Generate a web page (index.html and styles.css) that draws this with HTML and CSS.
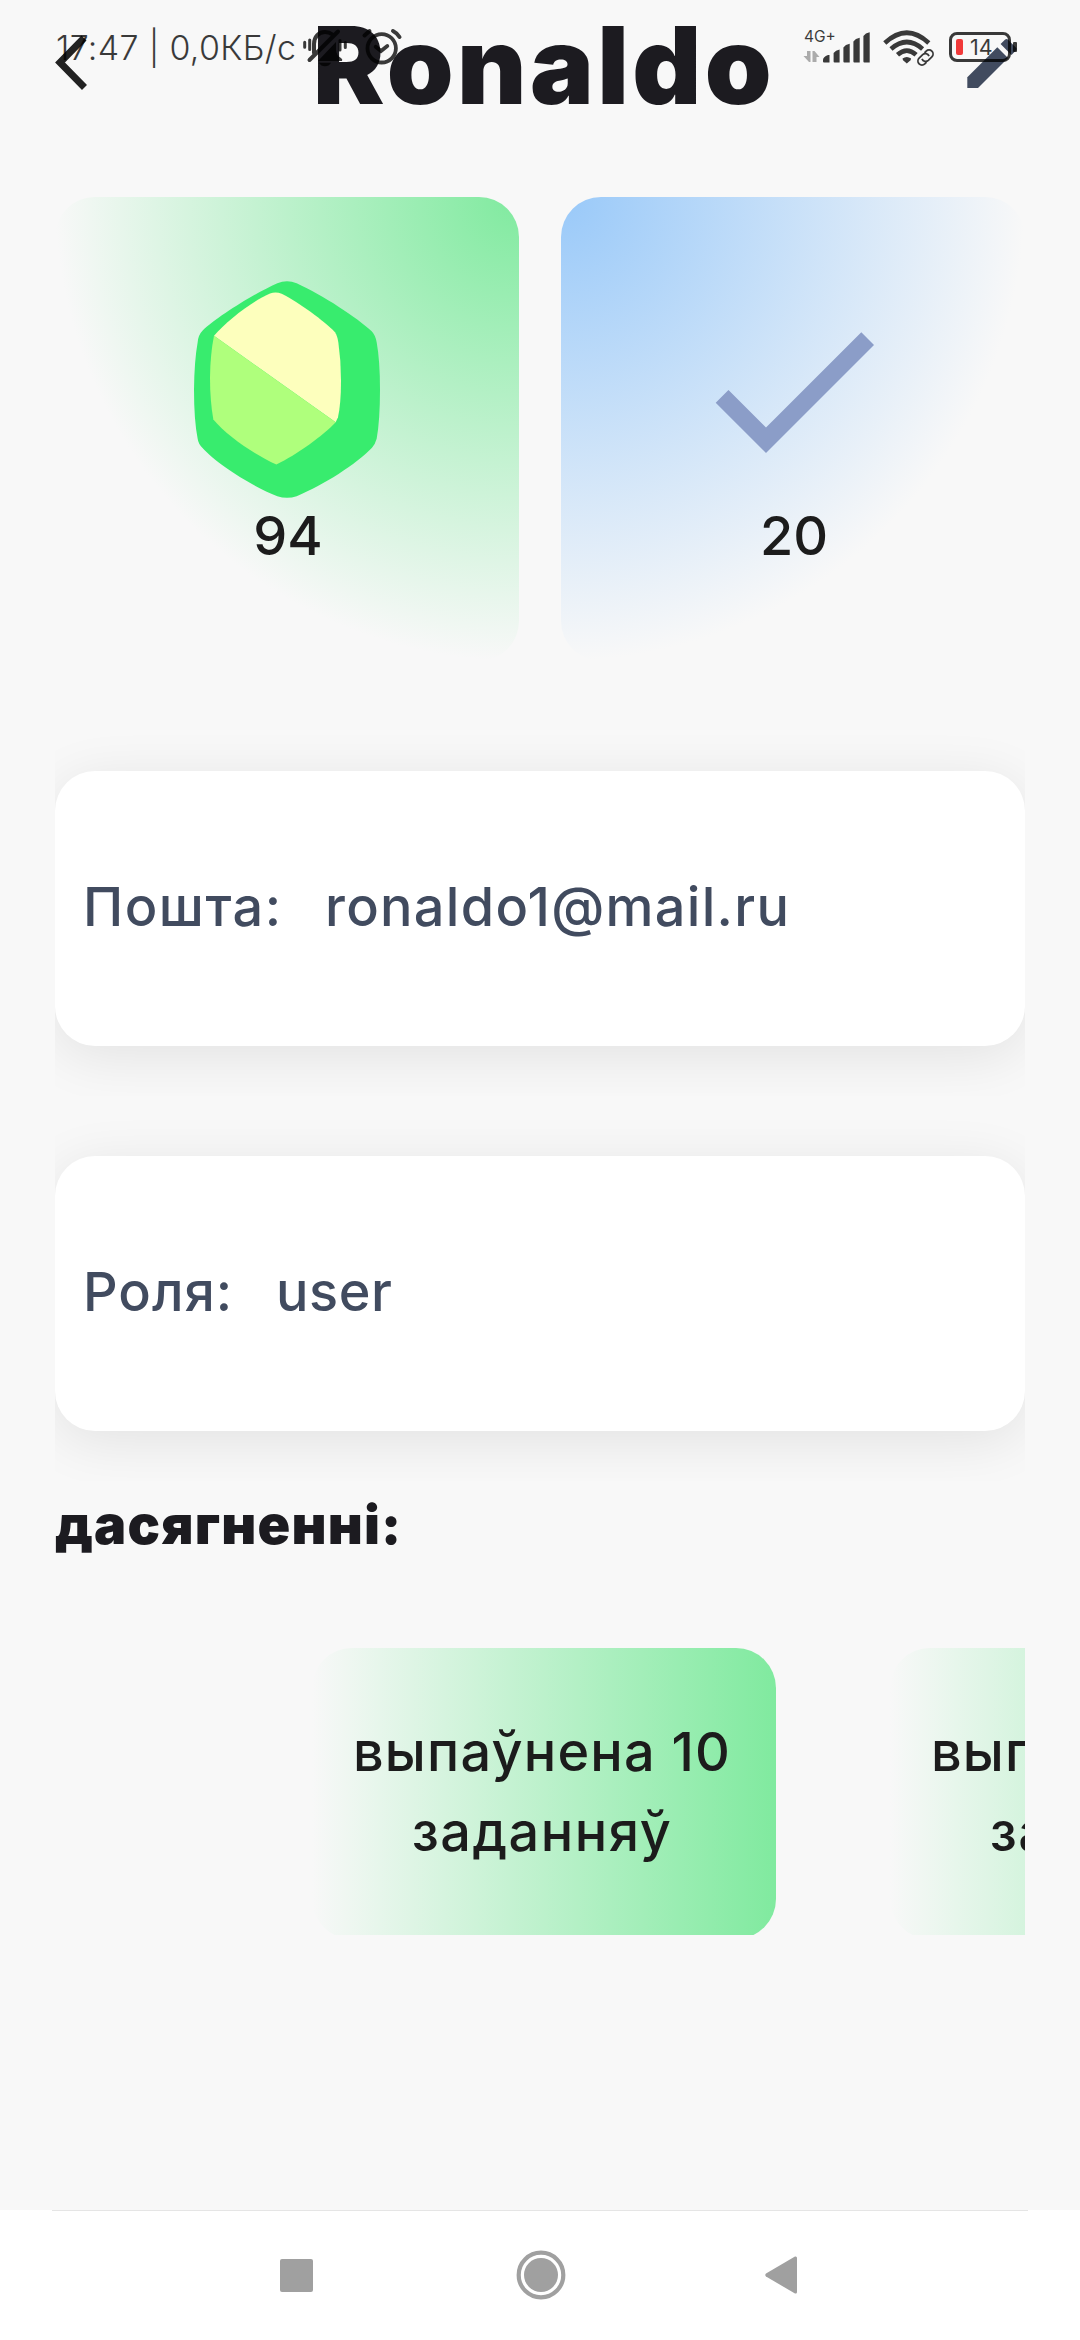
FILE: index.html
```html
<!DOCTYPE html>
<html lang="be">
<head>
<meta charset="utf-8">
<title>Ronaldo</title>
<link rel="stylesheet" href="styles.css">
</head>
<body>
<div class="screen">
  <main class="page">
    <header class="top">
      <svg class="back" viewBox="55 35 32 55"><path d="M84 38 60 62.5 84.5 87.5"/></svg>
      <h1 class="name">Ronaldo</h1>
      <svg class="edit" viewBox="967 38 50 50"><path d="M967.3 77.3l30-30L1008 58 978 88h-10.7z"/><path d="M1000.600 44l4.300-4.300q1.600-1.600 3.200 0l7.700 7.700q1.600 1.600 0 3.200l-4.300 4.300z"/></svg>
    </header>

    <section class="stats">
      <div class="stat stat-green">
        <svg class="gem" viewBox="462 302 558 650">
          <path fill="#38ec6e" d="M712 308Q741 296 770 308C850 345 950 410 995 452Q1006 463 1010 485Q1020 540 1020 627Q1020 720 1010 775Q1006 790 996 802C950 850 850 915 770 947Q741 957 712 947C640 920 530 850 487 802Q475 790 473 775Q462 720 462 627Q463 540 473 485Q475 463 488 450C530 410 640 340 712 308Z"/>
          <path fill="#fdffbd" d="M522 466C560 420 640 360 690 339Q708 333 725 340C780 368 850 420 885 455Q892 465 895 485Q903 540 903 600Q903 670 894 710L887 725Z"/>
          <path fill="#afff7c" d="M887 725C850 765 770 822 709 852C640 820 560 765 520 717Q510 660 510 590Q511 520 522 466Z"/>
        </svg>
        <span class="stat-value">94</span>
      </div>
      <div class="stat stat-blue">
        <svg class="check" viewBox="0 0 24 24"><path d="M9 16.170 4.830 12l-1.420 1.410L9 19 21 7l-1.410-1.410z"/></svg>
        <span class="stat-value">20</span>
      </div>
    </section>

    <section class="infos">
      <div class="info-clip"><div class="info"><span class="label mail-label">Пошта:</span><span class="mail">ronaldo1@mail.ru</span></div></div>
      <div class="info-clip"><div class="info"><span class="label role-label">Роля:</span><span class="role">user</span></div></div>
    </section>

    <h2 class="heading">дасягненні:</h2>

    <section class="carousel">
      <div class="badge"><span class="l1">выпаўнена 10</span><span class="l2">заданняў</span></div>
      <div class="badge"><span class="l1">выпаўнена 10</span><span class="l2">заданняў</span></div>
    </section>
  </main>

  <nav class="nav">
    <svg class="nav-square" viewBox="0 0 33 33"><rect width="33" height="33" rx="2"/></svg>
    <svg class="nav-circle" viewBox="0 0 50 50"><circle cx="25" cy="25" r="22.300" fill="none" stroke="#a0a0a0" stroke-width="4.200"/><circle cx="25" cy="25" r="17"/></svg>
    <svg class="nav-back" viewBox="0 0 32 38"><path d="M1 17.500 30 .500Q32 0 32 2V36Q32 38 30 37.500L1 20.500Q-.5 19 1 17.500Z"/></svg>
  </nav>

  <div class="status">
    <span class="clock">17:47 | 0,0КБ/с</span>
    <svg class="alerts" viewBox="300 25 104 45">
      <g fill="none" stroke="#000" stroke-linecap="round">
        <path stroke-width="3" d="M304.700 42.300v5M309.700 40v9.500M340 40.500v9.500M345.300 42.500v5"/>
        <path stroke-width="4" d="M309.500 60 338 31.500M314 53v-9c0-7 4.500-12 11-12 3 0 5.500 1 7.500 2.500"/>
        <path stroke-width="3.800" d="M375.700 46.700l5.300 4.300 6.300-5"/>
        <circle cx="381.700" cy="48.300" r="14.200" stroke-width="3.800"/>
        <path stroke-width="4" d="M364.500 35.500l5-4.500M393 31q4 2 6.500 6"/>
      </g>
      <path d="M319 62.700h12q-2 3.500-6 3.500t-6-3.500zM318 61l18-19v8q0 5 5 8 2 1.500 1 3z"/>
    </svg>
    <div class="network">
      <span class="net-type">4G+</span>
      <svg class="signal" viewBox="803 31 67 32">
        <path fill="#000" fill-opacity=".4" d="M807 51h3.500v11h-1.500l-5.500-6h3.500zM812.500 51h2l5 6h-3v5h-4z"/>
        <path d="M823 60q0-3 5-5h1.500v7.500H824q-1 0-1-1zM833.600 53q2-3 6-3.500v13h-5q-1 0-1-1zM843.400 47.500q2-3 6.300-3.700v18.700h-5.300q-1 0-1-1zM853.400 41.500q2-3 6.300-3.700v24.700h-5.300q-1 0-1-1zM863.400 36q2-3 6.300-3.700v30.200h-5.300q-1 0-1-1z"/>
      </svg>
    </div>
    <svg class="wifi" viewBox="883 29 52 37">
      <g fill="none" stroke="#000">
        <path stroke-width="4.600" d="M884.800 43q22-20.500 44 0M891 49q15.800-14 31.600 0M897.500 54.800q9.300-8.500 18.600 0"/>
        <g transform="rotate(-45 925.500 57.500)" stroke-width="1.800"><path d="M923 61.500h-2.500a4 4 0 0 1 0-8h5a4 4 0 0 1 3.500 5.500M928 53.500h2.500a4 4 0 0 1 0 8h-5a4 4 0 0 1-3.500-5.500"/></g>
      </g>
      <path d="M902.500 58.500q4.300-3 8.600 0 0 2-2 3l-2.300 2-2.300-2q-2-1-2-3z"/>
    </svg>
    <div class="battery">
      <i class="charge"></i><span class="percent">14</span>
    </div>
    <i class="battery-tip"></i>
  </div>
</div>
</body>
</html>
```
FILE: styles.css
```css
* { box-sizing: border-box; }
body { margin: 0; background: #f8f8f8; }
h1, h2 { margin: 0; }
svg { display: block; flex: none; }

.screen {
  position: relative;
  width: 1080px;
  height: 2340px;
  overflow: hidden;
  display: flex;
  flex-direction: column;
  background: #f8f8f8;
  font-family: Inter, "Noto Sans", sans-serif;
  font-weight: 500;
  font-size: 54px;
  color: #1c1c1c;
}

.page { flex: 1; padding: 0 55px; }

.top {
  height: 197px;
  display: flex;
  justify-content: space-between;
}
.back { width: 32px; height: 55px; margin-top: 35px; fill: none; stroke: #222; stroke-width: 7; }
.name {
  margin-left: 34px;
  font-weight: 900;
  font-size: 107px;
  line-height: 130px;
  letter-spacing: 3.4px;
  color: #1c1b20;
  white-space: nowrap;
}
.edit { width: 50px; height: 50px; margin: 38px 8px 0 0; fill: #414b5f; }

.stats { display: flex; justify-content: space-between; }
.stat {
  width: 464px;
  height: 464px;
  border-radius: 40px;
  padding-top: 84px;
  display: flex;
  flex-direction: column;
  align-items: center;
}
.stat-green { background: radial-gradient(circle 464px at 100% 0, #80ea9f, #f8f8f8); }
.stat-blue { background: radial-gradient(circle 464px at 0 0, #99c9f9, #f8f8f8); }
.gem { width: 186px; height: 217px; }
.check { width: 216px; height: 216px; margin-top: 1px; fill: #8b9dc8; }
.stat-value { padding-left: 2px; line-height: 75px; }

.infos { padding-top: 50px; display: flex; flex-direction: column; }
.info-clip { height: 385px; padding-top: 60px; overflow: hidden; }
.info {
  height: 275px;
  border-radius: 40px;
  background: #fff;
  box-shadow: 0 10px 55px rgba(0, 0, 0, .09);
  display: flex;
  align-items: center;
  padding: 0 0 4px 28px;
  color: #414b5f;
  letter-spacing: 1px;
  white-space: nowrap;
}
.label { flex: none; }
.mail-label { width: 242px; letter-spacing: 1.5px; }
.mail { letter-spacing: 1.3px; }
.role-label { width: 193px; }
.role { letter-spacing: .6px; }

.heading {
  height: 80px;
  margin-top: 4px;
  line-height: 80px;
  font-size: 54px;
  font-weight: 900;
  letter-spacing: 1.2px;
  color: #1c1b20;
  white-space: nowrap;
}

.carousel {
  height: 287px;
  margin-top: 83px;
  padding-left: 257px;
  display: flex;
  gap: 114px;
  overflow: hidden;
}
.badge {
  flex: none;
  width: 464px;
  height: 291px;
  padding: 64px 4px 0 0;
  border-radius: 40px;
  background: linear-gradient(90deg, #f8f8f8, #80ea9f);
  display: flex;
  flex-direction: column;
  align-items: center;
  line-height: 80px;
  letter-spacing: 1.2px;
  white-space: nowrap;
}
.l2 { letter-spacing: 1.5px; }

.nav {
  height: 130px;
  display: flex;
  align-items: center;
  justify-content: center;
  padding-right: 4px;
  background: linear-gradient(#e5e5e5, #e5e5e5) 52px 0 / 976px 1px no-repeat #fff;
  fill: #a0a0a0;
}
.nav-square { width: 33px; height: 33px; margin-right: 203px; }
.nav-circle { width: 50px; height: 50px; margin-right: 199px; }
.nav-back { width: 32px; height: 38px; }

.status {
  position: absolute;
  inset: 0 0 auto 0;
  height: 94px;
  display: flex;
  padding-left: 56px;
  font-family: Inter, sans-serif;
  font-weight: 300;
  color: #000;
  opacity: .77;
}
.clock { width: 244px; padding-top: 26px; font-size: 34px; line-height: 44px; letter-spacing: .3px; white-space: nowrap; }
.alerts { width: 104px; height: 45px; margin-top: 25px; }
.network { width: 67px; margin: 29px 0 0 399px; }
.net-type { display: block; height: 2px; padding-left: 1px; font-size: 15.500px; line-height: 16px; font-weight: 400; }
.signal { width: 67px; height: 32px; }
.wifi { width: 52px; height: 37px; margin: 29px 0 0 13px; }
.battery {
  width: 62px;
  height: 30px;
  margin: 32px 0 0 14px;
  border: 3.500px solid #000;
  border-radius: 8px;
  display: flex;
  align-items: center;
  padding-left: 4px;
}
.charge { width: 7px; height: 16px; border-radius: 2px; background: #f00000; }
.percent { margin-left: 7px; font-size: 21.500px; line-height: 24px; font-weight: 400; }
.battery-tip { width: 4px; height: 10px; margin: 42px 0 0 2px; border-radius: 1px; background: #000; }
```
